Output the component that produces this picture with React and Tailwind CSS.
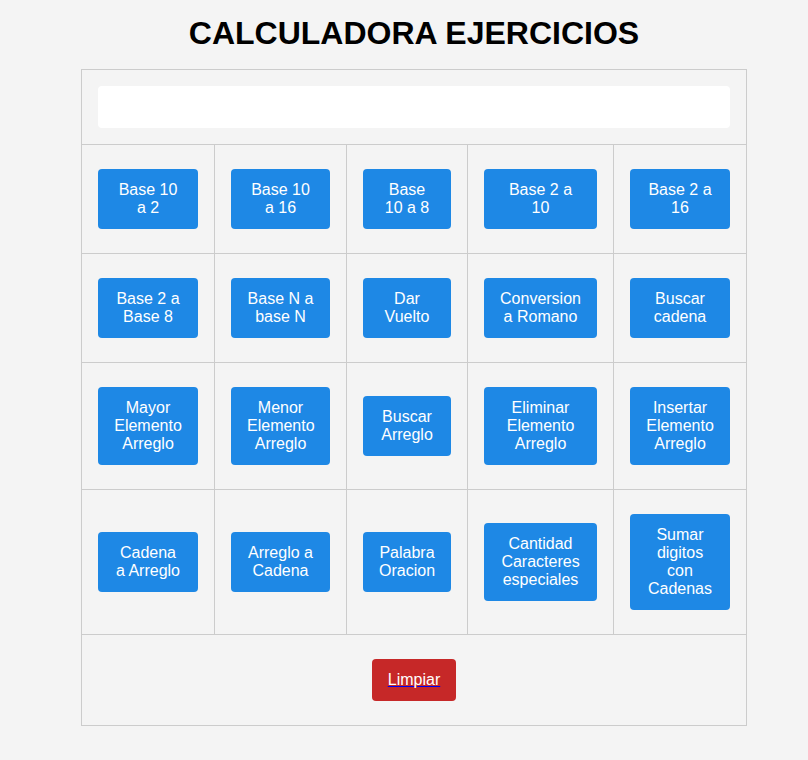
import { useState } from 'react';

const rows = [
  ['Base 10 a 2', 'Base 10 a 16', 'Base 10 a 8', 'Base 2 a 10', 'Base 2 a 16'],
  ['Base 2 a Base 8', 'Base N a base N', 'Dar Vuelto', 'Conversion a Romano', 'Buscar cadena'],
  ['Mayor Elemento Arreglo', 'Menor Elemento Arreglo', 'Buscar Arreglo', 'Eliminar Elemento Arreglo', 'Insertar Elemento Arreglo'],
  ['Cadena a Arreglo', 'Arreglo a Cadena', 'Palabra Oracion', 'Cantidad Caracteres especiales', 'Sumar digitos con Cadenas'],
];

export default function App() {
  const [valor, setValor] = useState('');

  return (
    <div className="min-h-[760px] bg-[#f4f4f4] pl-[20px] font-['Liberation_Sans',Arial,sans-serif]">
      <h1 className="m-0 pt-[15px] pb-[17px] text-center text-[32px] font-bold leading-[37px] text-black">
        CALCULADORA EJERCICIOS
      </h1>

      <div className="mx-auto w-[666px] border-l border-t border-[#cccccc]">
        {/* Pantalla */}
        <div className="border-b border-r border-[#cccccc] p-4">
          <input
            type="text"
            value={valor}
            onChange={e => setValor(e.target.value)}
            className="block h-[42px] w-full rounded-[4px] bg-white px-3 text-base outline-none"
          />
        </div>

        {/* Botones */}
        <div className="grid grid-cols-[133px_132px_121px_146px_133px]">
          {rows.flat().map(label => (
            <div key={label} className="flex items-center border-b border-r border-[#cccccc] px-4 py-6">
              <button className="w-full rounded-[4px] bg-[#1e88e5] px-4 py-3 text-center text-base leading-[18px] text-white">
                {label}
              </button>
            </div>
          ))}
        </div>

        <div className="flex justify-center border-b border-r border-[#cccccc] px-4 py-6">
          <button
            onClick={() => setValor('')}
            className="rounded-[4px] bg-[#c62828] px-4 py-3 text-base leading-[18px] text-white underline decoration-[#0000ee] decoration-1"
          >
            Limpiar
          </button>
        </div>
      </div>
    </div>
  );
}
